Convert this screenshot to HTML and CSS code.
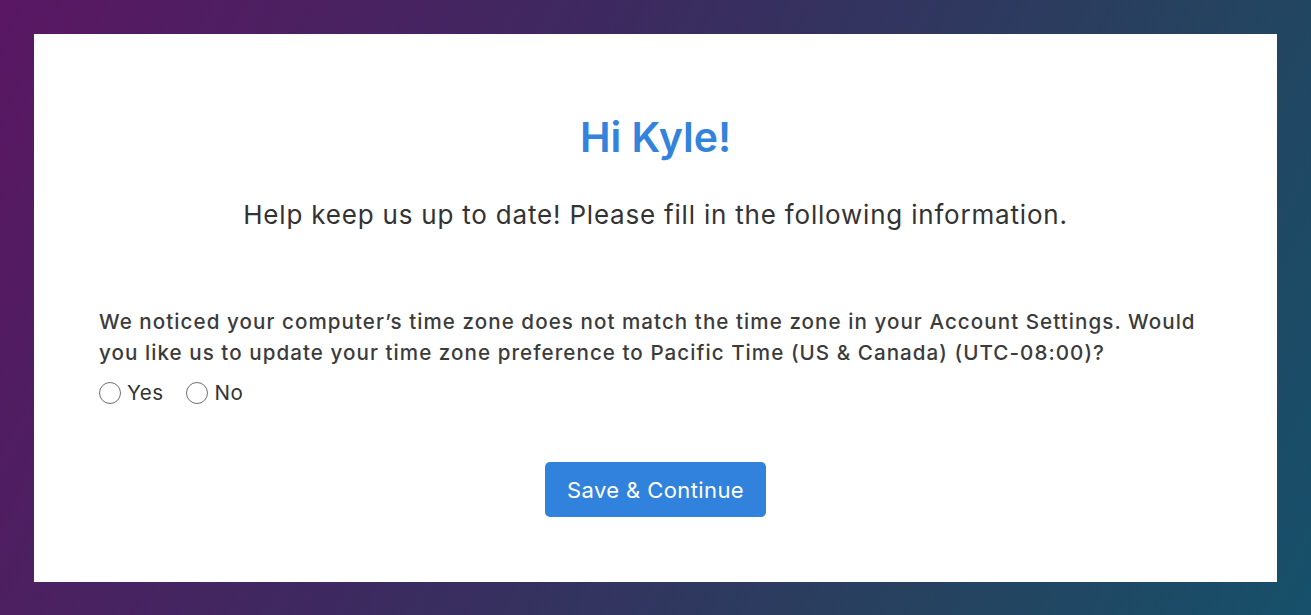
FILE: index.html
```html
<!DOCTYPE html>
<html lang="en">
<head>
<meta charset="utf-8">
<title>Update information</title>
<link rel="stylesheet" href="styles.css">
</head>
<body>
<main class="card">
  <h1 class="title">Hi Kyle!</h1>
  <p class="subtitle">Help keep us up to date! Please fill in the following information.</p>
  <form class="form">
    <p class="question">We noticed your computer’s time zone does not match the time zone in your Account Settings. Would you like us to update your time zone preference to Pacific Time (US &amp; Canada) (UTC-08:00)?</p>
    <div class="options">
      <label class="option"><input type="radio" name="tz" class="radio-input"><span class="radio"></span>Yes</label>
      <label class="option"><input type="radio" name="tz" class="radio-input"><span class="radio"></span>No</label>
    </div>
    <div class="actions">
      <button type="button" class="btn">Save &amp; Continue</button>
    </div>
  </form>
</main>
</body>
</html>
```
FILE: styles.css
```css
* { box-sizing: border-box; }
html, body { height: 100%; }
body {
  margin: 0;
  padding: 34px 34px 33px;
  background: linear-gradient(115deg, #5a1763 0%, #3c2a5f 40%, #26425f 75%, #16506a 100%);
  font-family: Inter, "Noto Sans", sans-serif;
  color: #3a3a3a;
}
.card {
  background: #fff;
  height: 548px;
  padding: 78px 65px 0;
  display: flex;
  flex-direction: column;
}
.title {
  margin: 0;
  text-align: center;
  font-size: 41px;
  font-weight: 600;
  color: #3383dd;
  line-height: 50px;
}
.subtitle {
  margin: 36px 0 0;
  text-align: center;
  font-size: 26px;
  font-weight: 400;
  line-height: 34px;
  letter-spacing: 0.8px;
  color: #333;
}
.form { margin-top: 74px; }
.question {
  margin: 0;
  font-size: 20.6px;
  font-weight: 500;
  line-height: 31px;
  letter-spacing: 1.05px;
  color: #3b3b3b;
}
.options {
  display: flex;
  gap: 23px;
  margin-top: 11px;
}
.option {
  display: flex;
  align-items: center;
  font-size: 20.6px;
  line-height: 28px;
  letter-spacing: 0.4px;
  color: #333;
}
.radio-input { display: none; }
.radio {
  width: 22px;
  height: 22px;
  border: 1.5px solid #707070;
  border-radius: 50%;
  margin-right: 6px;
}
.actions {
  display: flex;
  justify-content: center;
  margin-top: 55px;
}
.btn {
  width: 221px;
  height: 55px;
  border: none;
  border-radius: 5px;
  background: #3182dc;
  color: #fff;
  font-family: inherit;
  font-size: 22px;
  font-weight: 400;
  letter-spacing: 0.4px;
}
```
